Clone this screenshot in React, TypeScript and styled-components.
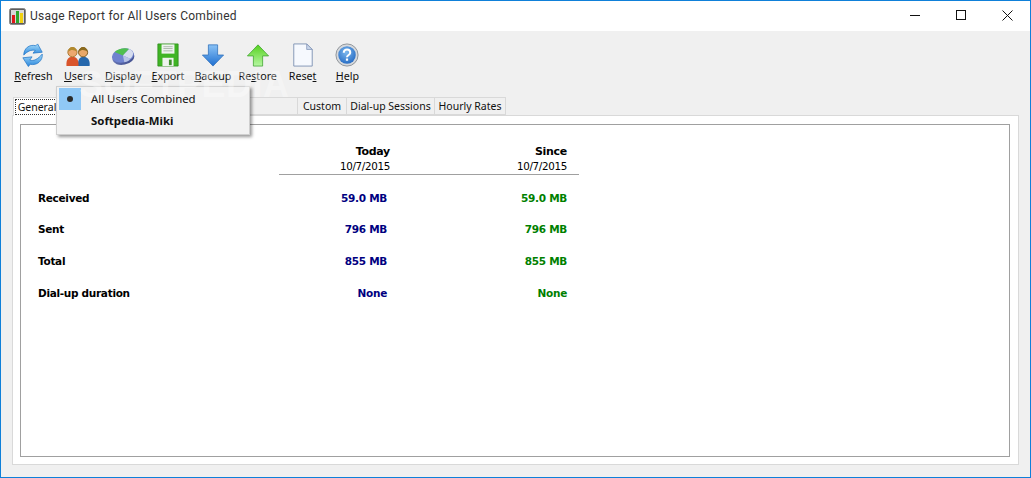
import React from "react";
import styled, { createGlobalStyle } from "styled-components";

const Global = createGlobalStyle`
  html, body { margin: 0; padding: 0; background: #f0f0f0; }
  #root { width: 1031px; height: 478px; }
  * { box-sizing: border-box; }
`;

const uiFont = `"Noto Sans", "Liberation Sans", sans-serif`;
const dataFont = `"DejaVu Sans", "Liberation Sans", sans-serif`;

const Win = styled.div`
  position: relative;
  width: 1031px;
  height: 478px;
  border: 1px solid #0f80d9;
  background: #f0f0f0;
  display: flex;
  flex-direction: column;
  overflow: hidden;
  font-family: ${uiFont};
  color: #000;
`;

const TitleBar = styled.div`
  height: 30px;
  flex: none;
  background: #fff;
  display: flex;
  align-items: center;
  padding-left: 8px;
`;

const AppIcon = styled.svg`
  width: 17px;
  height: 17px;
  flex: none;
`;

const TitleText = styled.div`
  margin-left: 4px;
  font-size: 12px;
  font-family: "Roboto", sans-serif;
  color: #333;
  letter-spacing: 0.25px;
  white-space: nowrap;
  flex: 1;
`;

const Controls = styled.div`
  display: flex;
  align-items: center;
`;

const Control = styled.svg`
  width: 46px;
  height: 30px;
  display: block;
`;

const Toolbar = styled.div`
  height: 63px;
  flex: none;
  display: flex;
  padding: 12px 0 0 10px;
`;

const ToolButton = styled.div`
  width: 44.86px;
  display: flex;
  flex-direction: column;
  align-items: center;
`;

const ToolIcon = styled.svg`
  width: 24px;
  height: 24px;
  flex: none;
`;

const ToolLabel = styled.div`
  margin-top: 2px;
  font-size: 10.7px;
  line-height: 15px;
  color: #111;
  white-space: nowrap;
`;

const TabStrip = styled.div`
  height: 21px;
  flex: none;
  display: flex;
  align-items: flex-end;
  padding-left: 13px;
  position: relative;
  z-index: 1;
`;

const Tab = styled.div<{ $w: number; $active?: boolean }>`
  width: ${(p) => p.$w}px;
  height: ${(p) => (p.$active ? 19 : 18)}px;
  flex: none;
  display: flex;
  align-items: center;
  justify-content: center;
  font-size: 10.5px;
  color: #111;
  white-space: nowrap;
  background: ${(p) => (p.$active ? "#fff" : "#f0f0f0")};
  border: 1px solid #d9d9d9;
  border-bottom: ${(p) => (p.$active ? "none" : "1px solid #d9d9d9")};
  margin-left: -1px;
  margin-bottom: ${(p) => (p.$active ? "-1px" : "0")};
`;

const FocusLabel = styled.span`
  outline: 1px dotted #333;
  padding: 0 2px;
  line-height: 14px;
`;

const TabPanel = styled.div`
  width: 1007px;
  height: 350px;
  margin-left: 11px;
  background: #fff;
  border: 1px solid #d9d9d9;
  padding: 8px 7px;
`;

const ReportBox = styled.div`
  width: 990px;
  height: 333px;
  border: 1px solid #a0a0a0;
  font-family: ${dataFont};
  font-size: 10.5px;
  letter-spacing: -0.3px;
  padding-top: 20px;
`;

const HeaderRow = styled.div`
  width: 300px;
  height: 30px;
  margin-left: 258px;
  border-bottom: 1px solid #a0a0a0;
  display: grid;
  grid-template-columns: 111px 177px;
  text-align: right;
`;

const HeaderCell = styled.div``;

const HeaderTitle = styled.div`
  font-weight: 700;
  font-size: 11px;
  line-height: 14px;
`;

const HeaderDate = styled.div`
  font-size: 10.3px;
  line-height: 14px;
`;

const Rows = styled.div`
  margin-top: 7px;
  padding-left: 17px;
`;

const Row = styled.div`
  height: 31.6px;
  display: grid;
  grid-template-columns: 240px 109px 180px;
  align-items: center;
  font-weight: 700;
  white-space: nowrap;
`;

const RowLabel = styled.div``;

const Value = styled.div<{ $color: string }>`
  text-align: right;
  color: ${(p) => p.$color};
`;

const Menu = styled.div`
  position: absolute;
  left: 55px;
  top: 85px;
  width: 194px;
  height: 49px;
  background: #f2f2f2;
  border: 1px solid #cfcfcf;
  box-shadow: 2px 2px 3px rgba(0, 0, 0, 0.4);
  padding: 1px 1px 1px 2px;
  z-index: 5;
`;

const MenuItem = styled.div<{ $bold?: boolean }>`
  height: 22px;
  display: flex;
  align-items: center;
  font-size: 11.4px;
  font-weight: ${(p) => (p.$bold ? 700 : 400)};
  color: #111;
  white-space: nowrap;
`;

const MenuLabel = styled.span`
  margin-top: -2px;
`;

const Check = styled.div<{ $on?: boolean }>`
  width: 22px;
  height: 22px;
  margin-right: 10px;
  flex: none;
  display: flex;
  align-items: center;
  justify-content: center;
  background: ${(p) => (p.$on ? "#90c8f6" : "transparent")};
`;

const Dot = styled.div`
  width: 6px;
  height: 6px;
  border-radius: 50%;
  background: #2a2a2a;
`;

const Watermark = styled.div`
  position: absolute;
  left: 78px;
  top: 66px;
  font-family: "Liberation Sans", sans-serif;
  font-weight: 700;
  font-size: 36px;
  line-height: 36px;
  letter-spacing: 0.5px;
  color: rgba(255, 255, 255, 0.32);
  z-index: 6;
  pointer-events: none;
  white-space: nowrap;
`;

const RefreshIcon = () => (
  <ToolIcon viewBox="0 0 26 26">
    <defs>
      <linearGradient id="rf" x1="0" y1="0" x2="0" y2="1">
        <stop offset="0" stopColor="#a5dcfa" />
        <stop offset="1" stopColor="#2a86dc" />
      </linearGradient>
    </defs>
    <path d="M3 13C3 6 9 1 16 3l2-2 5 9-10 1 2.500-3C11 7 7 9 3 13z" fill="url(#rf)" stroke="#2476c6" strokeWidth=".8" strokeLinejoin="round" />
    <path d="M23 12c1 7-6 13-13 11l-2 2.500L2 16l10-1-2.500 3.500c4 1.500 9-1 13.500-6.500z" fill="url(#rf)" stroke="#2476c6" strokeWidth=".8" strokeLinejoin="round" />
  </ToolIcon>
);

const UsersIcon = () => (
  <ToolIcon viewBox="0 0 26 26">
    <path d="M13 25c-.5-7 2-10 6-10s7.500 3 6.500 10z" fill="#2567ac" />
    <path d="M.5 25c-.5-7 2-10 6.500-10s7 3 6.500 10z" fill="#d9542b" />
    <circle cx="18.500" cy="10" r="5" fill="#e8a768" stroke="#7d5a1d" strokeWidth="1" />
    <path d="M14 9.500c0-7 9-7 9 0-2-2-6-3-9 0z" fill="#8a6a1e" />
    <circle cx="7" cy="10" r="5" fill="#eda86f" stroke="#a8752a" strokeWidth="1" />
    <path d="M2.500 9.500c0-7 9-7 9 0-2-2-6-3-9 0z" fill="#b18a2d" />
  </ToolIcon>
);

const DisplayIcon = () => (
  <ToolIcon viewBox="0 0 26 26">
    <defs>
      <linearGradient id="dp" x1="0" y1="0" x2="1" y2="1">
        <stop offset="0" stopColor="#7a88c8" />
        <stop offset="1" stopColor="#3c4a88" />
      </linearGradient>
    </defs>
    <g transform="rotate(-12 13 14)">
      <ellipse cx="13" cy="16" rx="12" ry="7.500" fill="url(#dp)" />
      <ellipse cx="13" cy="13.500" rx="12" ry="7.500" fill="#6f83cf" />
      <path d="M13 13.500 5 7.900C9 5.300 17 5 21 8z" fill="#4fbf4f" />
      <path d="M13 13.500 21 8c5 3 4 8-1 10.500z" fill="#d5dcee" />
      <path d="M13 13.500 20 18.500c-1 2-4 2.500-7 2.500z" fill="#b7c3e6" />
    </g>
  </ToolIcon>
);

const ExportIcon = () => (
  <ToolIcon viewBox="0 0 26 26">
    <path d="M2 1h22v24H2z" fill="#3fb424" stroke="#2d8a1c" strokeWidth=".8" />
    <rect x="6" y="1.500" width="14" height="10" fill="#eef3ee" />
    <path d="M8 4h10M8 6h10M8 8.500h10" stroke="#a7b5a7" strokeWidth="1" />
    <rect x="7" y="16" width="12" height="9" fill="#eef3ee" />
    <rect x="14" y="18" width="3" height="6" fill="#3f8f2c" />
  </ToolIcon>
);

const BackupIcon = () => (
  <ToolIcon viewBox="0 0 26 26">
    <defs>
      <linearGradient id="bk" x1="0" y1="0" x2="0" y2="1">
        <stop offset="0" stopColor="#8bc3f6" />
        <stop offset="1" stopColor="#1f6fd0" />
      </linearGradient>
    </defs>
    <path d="M8 2h10v11h6.500L13 25 1.500 13H8z" fill="url(#bk)" stroke="#2a6cb8" strokeWidth=".8" strokeLinejoin="round" />
  </ToolIcon>
);

const RestoreIcon = () => (
  <ToolIcon viewBox="0 0 26 26">
    <defs>
      <linearGradient id="rs" x1="0" y1="0" x2="0" y2="1">
        <stop offset="0" stopColor="#56d11e" />
        <stop offset="1" stopColor="#b6f7a2" />
      </linearGradient>
    </defs>
    <path d="M13 2l11.500 12H18v11H8V14H1.500z" fill="url(#rs)" stroke="#3ba22a" strokeWidth=".8" strokeLinejoin="round" />
  </ToolIcon>
);

const ResetIcon = () => (
  <ToolIcon viewBox="0 0 26 26">
    <path d="M3 1h14l6 6v18H3z" fill="#f6f9fe" stroke="#7f93b4" strokeWidth="1" />
    <path d="M17 1v6h6z" fill="#c9d6ea" stroke="#7f93b4" strokeWidth=".8" strokeLinejoin="round" />
  </ToolIcon>
);

const HelpIcon = () => (
  <ToolIcon viewBox="0 0 26 26">
    <defs>
      <radialGradient id="hp" cx="0.45" cy="0.35" r="0.7">
        <stop offset="0" stopColor="#7db8ee" />
        <stop offset="1" stopColor="#2268c2" />
      </radialGradient>
    </defs>
    <circle cx="13" cy="13" r="12" fill="#d6d9dd" stroke="#8b9096" strokeWidth="1" />
    <circle cx="13" cy="13" r="9.500" fill="url(#hp)" />
    <path d="M9.500 10.500c0-4.500 7-4.500 7 0 0 2.500-3.500 2.500-3.500 5" fill="none" stroke="#fff" strokeWidth="2.200" />
    <rect x="11.800" y="16.800" width="2.400" height="2.400" fill="#fff" />
  </ToolIcon>
);

const tools: { pre: string; key: string; post: string; Icon: React.FC }[] = [
  { pre: "", key: "R", post: "efresh", Icon: RefreshIcon },
  { pre: "", key: "U", post: "sers", Icon: UsersIcon },
  { pre: "", key: "D", post: "isplay", Icon: DisplayIcon },
  { pre: "", key: "E", post: "xport", Icon: ExportIcon },
  { pre: "", key: "B", post: "ackup", Icon: BackupIcon },
  { pre: "Re", key: "s", post: "tore", Icon: RestoreIcon },
  { pre: "Rese", key: "t", post: "", Icon: ResetIcon },
  { pre: "", key: "H", post: "elp", Icon: HelpIcon },
];

const tabs = [
  { label: "Details", w: 85 },
  { label: "At a Glance", w: 154 },
  { label: "Custom", w: 50 },
  { label: "Dial-up Sessions", w: 89 },
  { label: "Hourly Rates", w: 72 },
];

const rows = [
  { label: "Received", today: "59.0 MB", since: "59.0 MB" },
  { label: "Sent", today: "796 MB", since: "796 MB" },
  { label: "Total", today: "855 MB", since: "855 MB" },
  { label: "Dial-up duration", today: "None", since: "None" },
];

export default function App() {
  return (
    <>
      <Global />
      <Win>
        <TitleBar>
          <AppIcon viewBox="0 0 17 17">
            <rect x="0.500" y="0.500" width="16" height="16" rx="2" fill="#5c5c5c" stroke="#8a8a8a" />
            <rect x="2" y="2" width="13" height="13" fill="#d8d8d8" />
            <rect x="3" y="7" width="3" height="8" fill="#e01818" />
            <rect x="7" y="3" width="3" height="12" fill="#2ca82c" />
            <rect x="11" y="5" width="3" height="10" fill="#f0d010" />
          </AppIcon>
          <TitleText>Usage Report for All Users Combined</TitleText>
          <Controls>
            <Control viewBox="0 0 46 30">
              <path d="M18 14.500h10" stroke="#111" strokeWidth="1" />
            </Control>
            <Control viewBox="0 0 46 30">
              <rect x="18.500" y="9.500" width="9" height="9" fill="none" stroke="#111" strokeWidth="1" />
            </Control>
            <Control viewBox="0 0 46 30">
              <path d="M18.500 9.500l10 10M28.500 9.500l-10 10" stroke="#111" strokeWidth="1" />
            </Control>
          </Controls>
        </TitleBar>
        <Toolbar>
          {tools.map((t) => (
            <ToolButton key={t.key + t.post}>
              <t.Icon />
              <ToolLabel>
                {t.pre}
                <u>{t.key}</u>
                {t.post}
              </ToolLabel>
            </ToolButton>
          ))}
        </Toolbar>
        <TabStrip>
          <Tab $w={48} $active>
            <FocusLabel>General</FocusLabel>
          </Tab>
          {tabs.map((t) => (
            <Tab key={t.label} $w={t.w}>
              {t.label}
            </Tab>
          ))}
        </TabStrip>
        <TabPanel>
          <ReportBox>
            <HeaderRow>
              <HeaderCell>
                <HeaderTitle>Today</HeaderTitle>
                <HeaderDate>10/7/2015</HeaderDate>
              </HeaderCell>
              <HeaderCell>
                <HeaderTitle>Since</HeaderTitle>
                <HeaderDate>10/7/2015</HeaderDate>
              </HeaderCell>
            </HeaderRow>
            <Rows>
              {rows.map((r) => (
                <Row key={r.label}>
                  <RowLabel>{r.label}</RowLabel>
                  <Value $color="#000080">{r.today}</Value>
                  <Value $color="#008000">{r.since}</Value>
                </Row>
              ))}
            </Rows>
          </ReportBox>
        </TabPanel>
        <Menu>
          <MenuItem>
            <Check $on>
              <Dot />
            </Check>
            <MenuLabel>All Users Combined</MenuLabel>
          </MenuItem>
          <MenuItem $bold>
            <Check />
            <MenuLabel>Softpedia-Miki</MenuLabel>
          </MenuItem>
        </Menu>
        <Watermark>SOFTPEDIA</Watermark>
      </Win>
    </>
  );
}
